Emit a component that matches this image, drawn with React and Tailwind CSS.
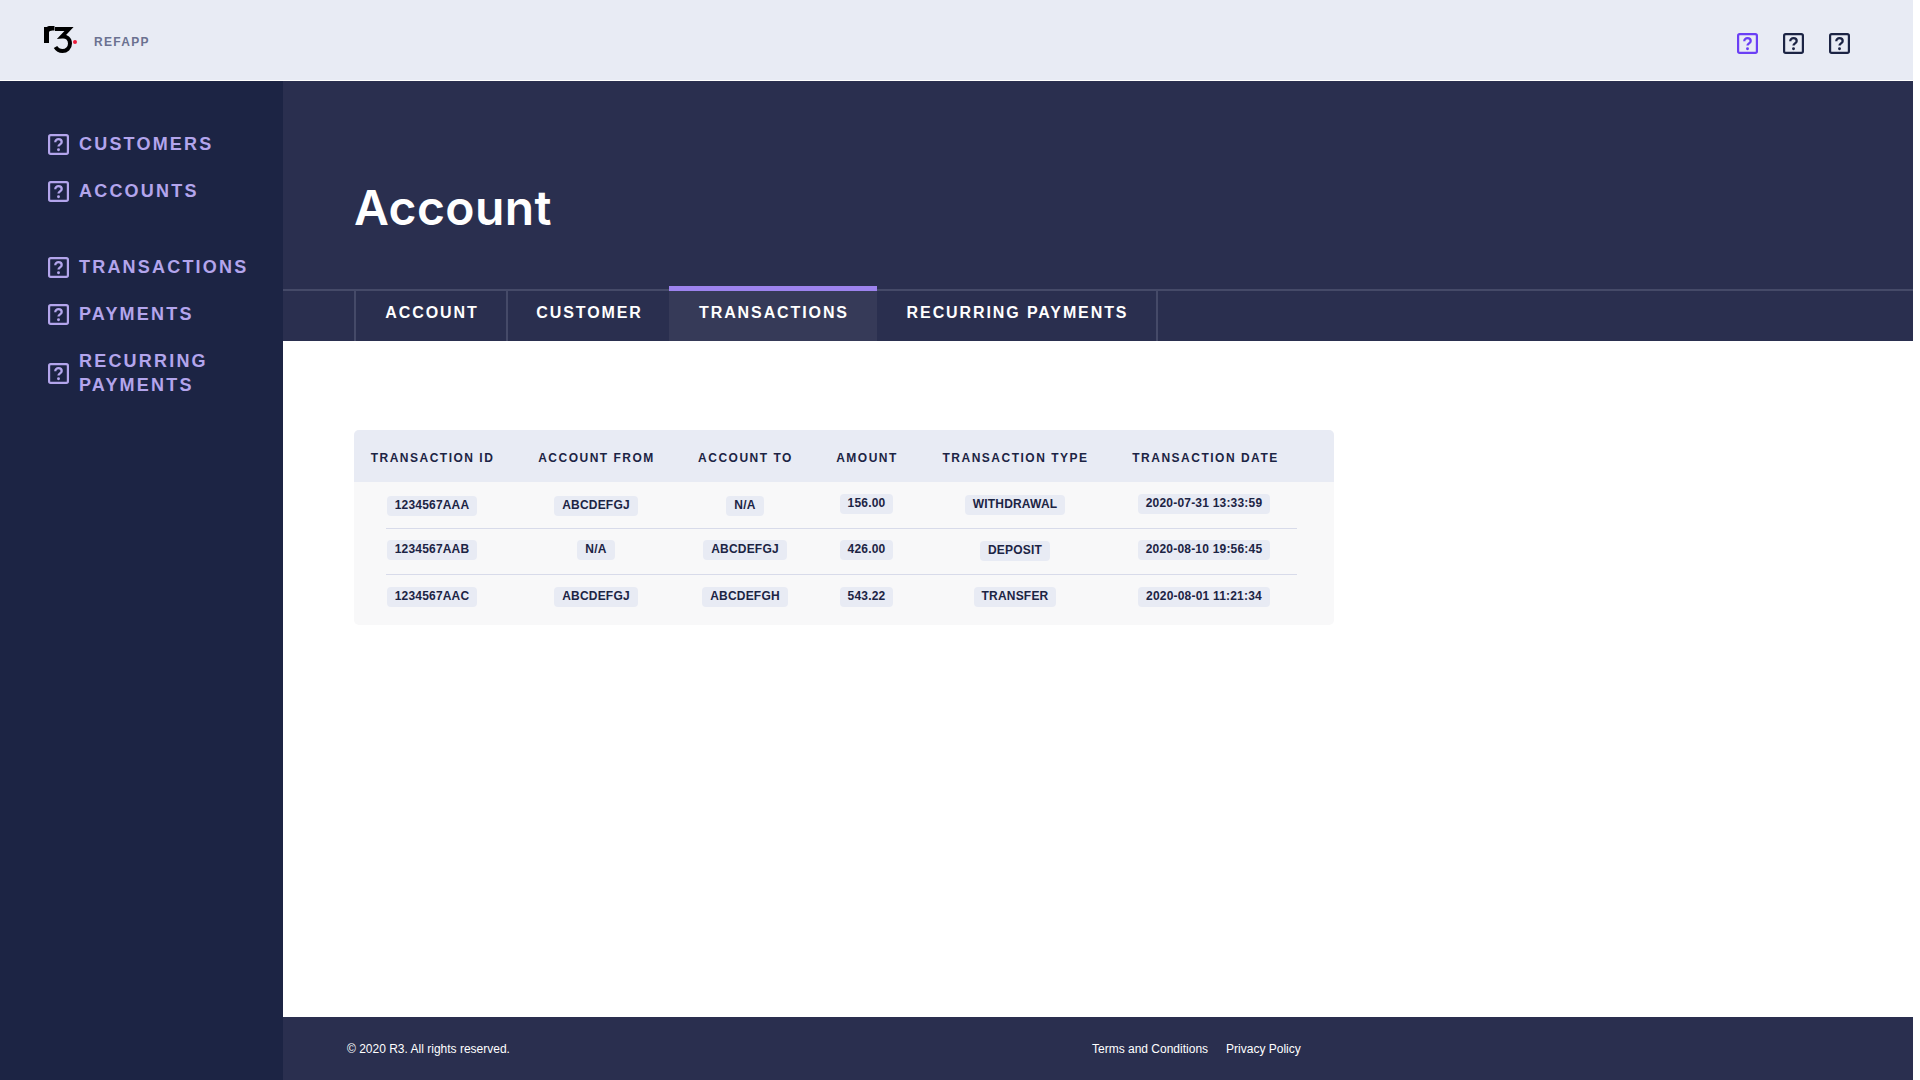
import React from 'react';

const sans = { fontFamily: '"Liberation Sans", Arial, sans-serif' };

const HelpBox = ({ className }) => (
  <svg viewBox="0 0 21 21" className={className} fill="none" stroke="currentColor">
    <rect x="1.1" y="1.1" width="18.8" height="18.8" rx="1.6" strokeWidth="2.2" />
    <path d="M7.3 8.2c0-1.9 1.3-3 3.2-3s3.2 1.1 3.2 2.7c0 2.4-3.2 2.5-3.2 4.7" strokeWidth="2.3" />
    <circle cx="10.5" cy="15.7" r="1.45" fill="currentColor" stroke="none" />
  </svg>
);

const Logo = () => (
  <svg viewBox="0 0 36 28" className="w-[36px] h-[28px]" fill="none">
    <path d="M3.5 1v16M3.5 6c.5-2.5 3-4 6-4h2" stroke="#000" strokeWidth="5" />
    <path d="M12 3h14l-7 7.5c4.5-.5 8 2 8 7 0 4.5-3.5 7.5-7.5 7.5-3 0-5.5-1.5-7-4" stroke="#000" strokeWidth="4" />
    <circle cx="32" cy="16" r="2" fill="#ed1c3a" />
  </svg>
);

const navTop = ['CUSTOMERS', 'ACCOUNTS'];
const navBottom = ['TRANSACTIONS', 'PAYMENTS', 'RECURRING PAYMENTS'];

const tabs = [
  { label: 'ACCOUNT', width: 'w-[152px]', line: true },
  { label: 'CUSTOMER', width: 'w-[163px]', line: true },
  { label: 'TRANSACTIONS', width: 'w-[208px]', active: true },
  { label: 'RECURRING PAYMENTS', width: 'w-[281px]', lastLine: true },
];

const columns = ['TRANSACTION ID', 'ACCOUNT FROM', 'ACCOUNT TO', 'AMOUNT', 'TRANSACTION TYPE', 'TRANSACTION DATE'];

const rows = [
  {
    h: 'h-[46px]',
    cells: [
      ['1234567AAA', 'mt-[14px]'], ['ABCDEFGJ', 'mt-[14px]'], ['N/A', 'mt-[14px]'],
      ['156.00', 'mt-[12px]'], ['WITHDRAWAL', 'mt-[13px]'], ['2020-07-31 13:33:59', 'mt-[12px]'],
    ],
  },
  {
    h: 'h-[45px]',
    cells: [
      ['1234567AAB', 'mt-[11px]'], ['N/A', 'mt-[11px]'], ['ABCDEFGJ', 'mt-[11px]'],
      ['426.00', 'mt-[11px]'], ['DEPOSIT', 'mt-[12px]'], ['2020-08-10 19:56:45', 'mt-[11px]'],
    ],
  },
  {
    h: 'h-[50px]',
    cells: [
      ['1234567AAC', 'mt-[12px]'], ['ABCDEFGJ', 'mt-[12px]'], ['ABCDEFGH', 'mt-[12px]'],
      ['543.22', 'mt-[12px]'], ['TRANSFER', 'mt-[12px]'], ['2020-08-01 11:21:34', 'mt-[12px]'],
    ],
  },
];

const gridCols = 'grid grid-cols-[156px_172px_126px_117px_180px_198px]';

const NavItem = ({ label }) => (
  <div className="flex items-center gap-[10px] pl-[48px] pr-4 py-[11.5px]">
    <HelpBox className="w-[21px] h-[21px] shrink-0 mt-[1px]" />
    <span className="text-[18px] leading-[24px] font-bold tracking-[2.2px]">{label}</span>
  </div>
);

const App = () => {
  return (
    <div className="h-[1080px] w-[1913px] flex flex-col overflow-hidden bg-white" style={sans}>
      {/* Top bar */}
      <header className="h-[81px] shrink-0 bg-[#e8ebf4] border-b border-white flex items-center justify-between pl-[43px] pr-[63px]">
        <div className="flex items-center gap-[15px]">
          <Logo />
          <span className="text-[12px] font-bold tracking-[1.3px] text-[#6b7190] mt-[3px]">REFAPP</span>
        </div>
        <div className="flex items-center gap-[25px] mt-[7px]">
          <HelpBox className="w-[21px] h-[21px] text-[#6b3ff5]" />
          <HelpBox className="w-[21px] h-[21px] text-[#1c2444]" />
          <HelpBox className="w-[21px] h-[21px] text-[#1c2444]" />
        </div>
      </header>

      <div className="flex flex-1 min-h-0">
        {/* Sidebar */}
        <aside className="w-[283px] shrink-0 bg-[#1c2444] text-[#b3a5ec] pt-[39px]">
          {navTop.map((l) => <NavItem key={l} label={l} />)}
          <div className="h-[29px]" />
          {navBottom.map((l) => <NavItem key={l} label={l} />)}
        </aside>

        <main className="flex-1 flex flex-col min-w-0">
          {/* Title */}
          <div className="h-[208px] shrink-0 bg-[#2a2f4f] pl-[71px] pt-[99px]">
            <h1 className="text-[48px] leading-[56px] font-semibold tracking-[0.4px] text-white" style={{ fontFamily: 'Inter, sans-serif' }}>Account</h1>
          </div>

          {/* Tabs */}
          <div className="h-[52px] shrink-0 bg-[#2a2f4f] flex pl-[71px] border-t-2 border-[#454a68]">
            {tabs.map((t) => (
              <div
                key={t.label}
                className={`${t.width} relative flex items-center justify-center pl-[2px] pb-[6px] text-[16px] font-bold tracking-[1.9px] text-white ${t.active ? 'bg-[#363a58]' : ''} ${t.line ? 'border-l-2 border-[#454a68]' : ''} ${t.lastLine ? 'border-r-2 border-[#454a68]' : ''}`}
              >
                {t.active && <div className="absolute -top-[5px] inset-x-0 h-[5px] bg-[#9d83ee]" />}
                {t.label}
              </div>
            ))}
          </div>

          {/* Content */}
          <div className="flex-1 pl-[71px] pt-[89px]">
            <div className="w-[980px] rounded-[5px] bg-[#f8f8f9] overflow-hidden text-[#1c2444]">
              <div className={`${gridCols} h-[52px] items-center bg-[#e8ebf4]`}>
                {columns.map((c) => (
                  <div key={c} className="text-center pl-[1px] pt-[3px] last:pl-[3px] text-[12px] font-bold tracking-[1.5px] whitespace-nowrap">{c}</div>
                ))}
              </div>
              {rows.map((row, i) => (
                <div key={i}>
                  {i > 0 && <div className="ml-[32px] w-[911px] h-[1px] bg-[#d8dbea]" />}
                  <div className={`${gridCols} ${row.h} items-start`}>
                    {row.cells.map(([text, mt], j) => (
                      <div key={j} className="flex justify-center">
                        <span className={`${mt} h-[20px] px-[8px] rounded-[4px] bg-[#e8ebf4] text-[12px] leading-[18px] font-bold tracking-[0.2px] whitespace-nowrap`}>{text}</span>
                      </div>
                    ))}
                  </div>
                </div>
              ))}
            </div>
          </div>

          {/* Footer */}
          <footer className="h-[63px] shrink-0 bg-[#2a2f4f] text-white text-[12px] flex items-center pl-[64px]">
            <span className="w-[745px]">© 2020 R3. All rights reserved.</span>
            <span>Terms and Conditions</span>
            <span className="ml-[18px]">Privacy Policy</span>
          </footer>
        </main>
      </div>
    </div>
  );
};

export default App;
